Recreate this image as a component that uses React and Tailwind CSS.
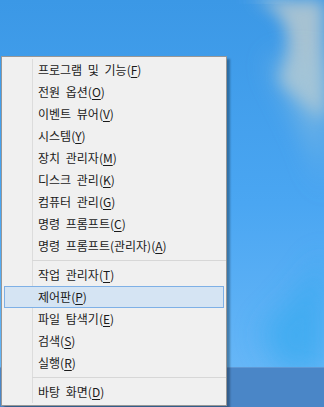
import React from 'react'

const groups = [
  [
    { label: '프로그램 및 기능', key: 'F' },
    { label: '전원 옵션', key: 'O' },
    { label: '이벤트 뷰어', key: 'V' },
    { label: '시스템', key: 'Y' },
    { label: '장치 관리자', key: 'M' },
    { label: '디스크 관리', key: 'K' },
    { label: '컴퓨터 관리', key: 'G' },
    { label: '명령 프롬프트', key: 'C' },
    { label: '명령 프롬프트(관리자)', key: 'A' },
  ],
  [
    { label: '작업 관리자', key: 'T' },
    { label: '제어판', key: 'P', active: true },
    { label: '파일 탐색기', key: 'E' },
    { label: '검색', key: 'S' },
    { label: '실행', key: 'R' },
  ],
  [{ label: '바탕 화면', key: 'D' }],
]

const MenuItem = ({ item }) => (
  <div
    className={`mx-[2px] flex h-[22px] items-center border pl-[33px] ${
      item.active ? 'border-[#7eb0e6] bg-[#d5e4f3]' : 'border-transparent'
    }`}
  >
    <span className="text-[12px] leading-none text-[#1a1a1a] [word-spacing:3px]">
      {item.label}(<span className="underline underline-offset-2">{item.key}</span>)
    </span>
  </div>
)

const Separator = () => (
  <div className="flex h-[7px] items-center pl-[30px]">
    <div className="h-px flex-1 bg-[#d7d7d7]" />
  </div>
)

export default function App() {
  return (
    <div
      className="relative h-[407px] w-[324px] overflow-hidden bg-gradient-to-b from-[#3b98e6] via-[#4aa6f2] to-[#6cbaf8]"
      style={{ fontFamily: '"Malgun Gothic", "Noto Sans CJK KR", sans-serif' }}
    >
      {/* wallpaper swoosh */}
      <svg className="absolute inset-0" width="324" height="407" viewBox="0 0 324 407">
        <defs>
          <filter id="blur" x="-50%" y="-50%" width="200%" height="200%">
            <feGaussianBlur stdDeviation="8" />
          </filter>
          <filter id="blur2" x="-50%" y="-50%" width="200%" height="200%">
            <feGaussianBlur stdDeviation="14" />
          </filter>
        </defs>
        <path d="M250 0 C 300 10, 290 60, 280 80 C 300 100, 324 120, 324 120 L 324 0 Z" fill="#b9c9cf" opacity="0.85" filter="url(#blur)" />
        <path d="M240 0 C 260 2, 270 4, 290 0 Z" fill="#dfe8ee" opacity="0.7" filter="url(#blur)" />
        <path d="M270 60 C 300 120, 324 160, 324 200 L 324 60 Z" fill="#9fc6dc" opacity="0.6" filter="url(#blur2)" />
        <path d="M260 330 C 290 300, 310 280, 324 250 L 324 370 L 280 370 Z" fill="#2fa8ee" opacity="0.6" filter="url(#blur2)" />
      </svg>

      {/* taskbar */}
      <div className="absolute bottom-0 left-0 right-0 h-[40px] border-t border-[#5f98d4] bg-[#4a86c7]" />

      {/* context menu */}
      <div className="absolute left-[1px] top-[56px] z-10 w-[226px] border border-[#979797] bg-[#f0f0f0] py-[2px] shadow-[3px_3px_2px_rgba(0,0,0,0.3)]">
        <div className="absolute bottom-[2px] left-[30px] top-[2px] w-px bg-[#dcdcdc]" />
        <div className="relative">
          {groups.map((group, gi) => (
            <div key={gi}>
              {gi > 0 && <Separator />}
              {group.map((item) => (
                <MenuItem key={item.label} item={item} />
              ))}
            </div>
          ))}
        </div>
      </div>
    </div>
  )
}
